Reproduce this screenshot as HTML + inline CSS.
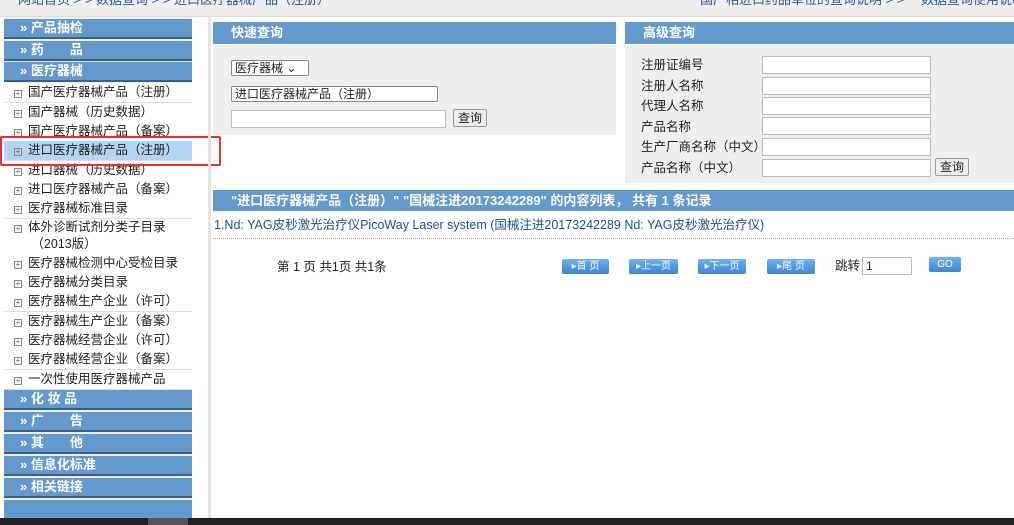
<!DOCTYPE html><html><head><meta charset="utf-8"><style>
*{margin:0;padding:0;box-sizing:border-box}
body{width:1014px;height:525px;overflow:hidden;background:#fff;font-family:"Liberation Sans","Noto Sans CJK SC",sans-serif;font-size:12px;color:#222;position:relative}
.top{position:absolute;left:0;top:0;width:1014px;height:17px;background:#efefef;border-bottom:1px solid #ddd;overflow:hidden}
.top span{position:absolute;top:-9px;font-size:13px;color:#2a5a9a;white-space:nowrap;line-height:18px}
.side{position:absolute;left:4px;top:17px;width:188px;height:501px;background:#efefef}
.hd{position:absolute;left:0;width:188px;height:20px;background:#6399cc;border-bottom:2px solid #3d5f86;color:#fff;font-weight:bold;font-size:13px;line-height:18px;padding-left:16px;overflow:hidden;white-space:nowrap}
.it{position:absolute;left:0;width:188px;height:20px;background:#fff;border-bottom:1px solid #ddd;font-size:12.5px;line-height:18px;padding-left:10px;color:#222;overflow:hidden;white-space:nowrap}
.it i{display:inline-block;width:8px;height:8px;border:1px solid #888;margin-right:6px;vertical-align:0px;font-style:normal;font-size:8px;line-height:6px;text-align:center;color:#666}
.gap{position:absolute;left:208px;top:17px;width:3px;height:501px;background:#e4e4e4}
.ph{position:absolute;height:22px;background:#6399cc;color:#fff;font-weight:bold;font-size:13px;line-height:22px;padding-left:18px;white-space:nowrap;overflow:hidden}
.pb{position:absolute;background:#efefef}
input.t{position:absolute;height:18px;border:1px solid #bbb;background:#fff}
.lab{position:absolute;font-size:12.5px;left:641px;line-height:16px;white-space:nowrap}
.sel{position:absolute;height:16px;border:1px solid #888;background:#fff;font-size:12px;line-height:14px;padding-left:3px;border-radius:2px;overflow:hidden;white-space:nowrap}
.btn{position:absolute;height:18px;border:1px solid #999;background:#eee;font-size:12px;line-height:16px;text-align:center;border-radius:2px}
.pg{position:absolute;top:259px;height:15px;background:linear-gradient(#6fb0ef,#3b86d6);color:#fff;font-size:10px;line-height:15px;text-align:center;border-radius:2px;overflow:hidden}
.bot{position:absolute;left:0;top:518px;width:1014px;height:7px;background:#222}
</style></head><body>
<div class="top"><span style="left:18px">网站首页 > > 数据查询 > > 进口医疗器械产品（注册）</span><span style="left:700px">国产相进口药品单位的查询说明 > >　 数据查询使用说明 ></span></div>
<div class="side">
<div class="hd" style="top:2px">» 产品抽检</div>
<div class="hd" style="top:24px">» 药　　品</div>
<div class="hd" style="top:45px">» 医疗器械</div>
<div class="it" style="top:66px"><i>+</i>国产医疗器械产品（注册）</div>
<div class="it" style="top:86px"><i>+</i>国产器械（历史数据）</div>
<div class="it" style="top:105px"><i>+</i>国产医疗器械产品（备案）</div>
<div class="it" style="top:124px;background:#b4d4f4"><i>+</i>进口医疗器械产品（注册）</div>
<div class="it" style="top:144px"><i>+</i>进口器械（历史数据）</div>
<div class="it" style="top:163px"><i>+</i>进口医疗器械产品（备案）</div>
<div class="it" style="top:182px"><i>+</i>医疗器械标准目录</div>
<div class="it" style="top:202px;height:36px;line-height:17px;white-space:normal"><i>+</i>体外诊断试剂分类子目录<br>&nbsp;&nbsp;&nbsp;&nbsp;&nbsp;（2013版）</div>
<div class="it" style="top:237px"><i>+</i>医疗器械检测中心受检目录</div>
<div class="it" style="top:256px"><i>+</i>医疗器械分类目录</div>
<div class="it" style="top:275px"><i>+</i>医疗器械生产企业（许可）</div>
<div class="it" style="top:295px"><i>+</i>医疗器械生产企业（备案）</div>
<div class="it" style="top:314px"><i>+</i>医疗器械经营企业（许可）</div>
<div class="it" style="top:333px"><i>+</i>医疗器械经营企业（备案）</div>
<div class="it" style="top:353px"><i>+</i>一次性使用医疗器械产品</div>
<div class="hd" style="top:373px">» 化 妆 品</div>
<div class="hd" style="top:395px">» 广　　告</div>
<div class="hd" style="top:417px">» 其　　他</div>
<div class="hd" style="top:439px">» 信息化标准</div>
<div class="hd" style="top:461px">» 相关链接</div>
<div class="hd" style="top:483px;height:18px;border:none"></div>
</div>
<div style="position:absolute;left:0;top:136px;width:221px;height:30px;border:2px solid #e83030;border-radius:2px"></div>
<div class="gap"></div>
<div class="ph" style="left:213px;top:22px;width:403px">快速查询</div>
<div class="pb" style="left:213px;top:45px;width:403px;height:90px"></div>
<div class="sel" style="left:231px;top:60px;width:78px">医疗器械 ⌄</div>
<div class="sel" style="left:231px;top:86px;width:207px">进口医疗器械产品（注册）</div>
<input class="t" style="left:231px;top:110px;width:215px">
<div class="btn" style="left:453px;top:109px;width:34px">查询</div>
<div class="ph" style="left:625px;top:22px;width:389px">高级查询</div>
<div class="pb" style="left:625px;top:45px;width:389px;height:138px"></div>
<div class="lab" style="top:57px">注册证编号</div><input class="t" style="left:762px;top:56px;width:169px">
<div class="lab" style="top:78px">注册人名称</div><input class="t" style="left:762px;top:77px;width:169px">
<div class="lab" style="top:98px">代理人名称</div><input class="t" style="left:762px;top:97px;width:169px">
<div class="lab" style="top:119px">产品名称</div><input class="t" style="left:762px;top:117px;width:169px">
<div class="lab" style="top:139px">生产厂商名称（中文）</div><input class="t" style="left:762px;top:138px;width:169px">
<div class="lab" style="top:160px">产品名称（中文）</div><input class="t" style="left:762px;top:159px;width:169px">
<div class="btn" style="left:935px;top:158px;width:34px">查询</div>
<div class="ph" style="left:213px;top:190px;width:801px;height:21px;line-height:21px;padding-left:18px">"进口医疗器械产品（注册）" "国械注进20173242289" 的内容列表， 共有 1 条记录</div>
<div style="position:absolute;left:214px;top:217px;font-size:12.5px;color:#1a4d9e;white-space:nowrap;line-height:16px">1.Nd: YAG皮秒激光治疗仪PicoWay Laser system (国械注进20173242289 Nd: YAG皮秒激光治疗仪)</div>
<div style="position:absolute;left:213px;top:238px;width:801px;border-top:1px dotted #aaa"></div>
<div style="position:absolute;left:277px;top:259px;font-size:12.5px;line-height:16px">第 1 页 共1页 共1条</div>
<div class="pg" style="left:562px;width:47px">▸首 页</div>
<div class="pg" style="left:629px;width:49px">▸上一页</div>
<div class="pg" style="left:698px;width:48px">▸下一页</div>
<div class="pg" style="left:767px;width:48px">▸尾 页</div>
<div style="position:absolute;left:835px;top:258px;font-size:12.5px;line-height:16px">跳转</div>
<input class="t" style="left:862px;top:257px;width:50px">
<div style="position:absolute;left:866px;top:259px;font-size:12px;line-height:14px">1</div>
<div class="pg" style="left:929px;width:32px;top:257px">GO</div>
<div class="bot"></div>
<div style="position:absolute;left:148px;top:518px;width:40px;height:7px;background:#555"></div>
</body></html>
